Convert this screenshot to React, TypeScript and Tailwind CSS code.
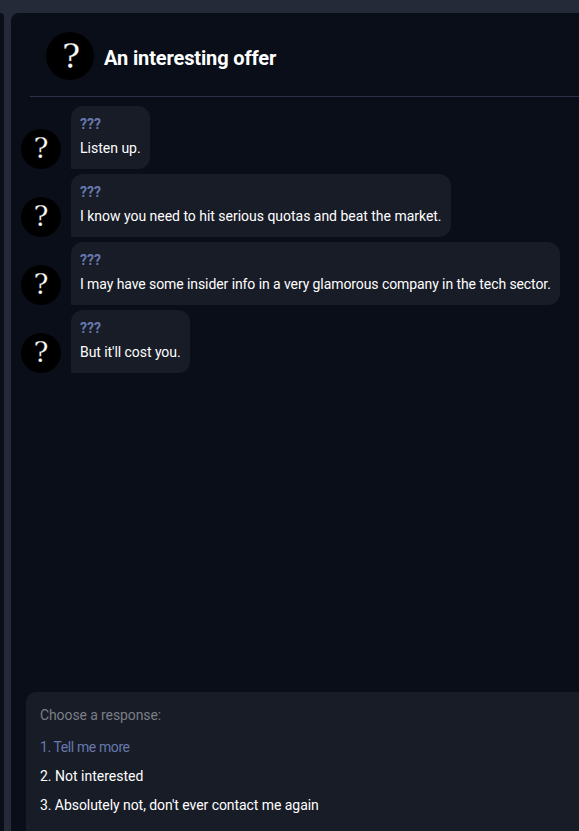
const messages = [
  { text: "Listen up.", size: "w-[79px]", spacing: "tracking-normal" },
  { text: "I know you need to hit serious quotas and beat the market.", size: "w-[380px]", spacing: "tracking-[-0.02px]" },
  { text: "I may have some insider info in a very glamorous company in the tech sector.", size: "w-[489px]", spacing: "tracking-[-0.085px]" },
  { text: "But it'll cost you.", size: "w-[119px]", spacing: "tracking-[-0.06px]" },
];

function Avatar({ large = false }: { large?: boolean }) {
  return (
    <div
      className={`flex shrink-0 items-center justify-center rounded-full bg-black font-['DejaVu_Serif',serif] text-white [-webkit-text-stroke:0.25px_black] ${
        large ? "size-12 pb-px pl-[2px] text-[34px] leading-[46px]" : "size-10 text-[28px] leading-[40px]"
      }`}
    >
      <span>?</span>
    </div>
  );
}

export default function App() {
  return (
    <div className="flex h-[831px] w-[579px] overflow-hidden bg-[#252a39] pt-[13px] font-[Roboto,sans-serif] text-[14px] text-white">
      <div className="w-1 shrink-0 rounded-tr-[8px] bg-[#0a0e19]" />
      <main className="ml-[7px] flex min-w-0 flex-1 flex-col rounded-tl-[8px] bg-[#0a0e19]">
        <header className="ml-[19px] flex h-[84px] shrink-0 items-start gap-[10px] border-b border-[#2b3146] pt-[19px] pl-4">
          <Avatar large />
          <h1 className="mt-[11px] text-[20px] leading-[30px] font-bold tracking-[-0.13px]">An interesting offer</h1>
        </header>
        <section className="mt-[9px] ml-[10px] flex flex-col gap-[5px]">
          {messages.map((message) => (
            <div key={message.text} className="flex items-end gap-[10px]">
              <Avatar />
              <div className={`h-[63px] shrink-0 rounded-[12px] rounded-bl-none bg-[#181c27] px-[9px] pt-[6px] ${message.size}`}>
                <div className="leading-6 font-bold text-[#6678ad]">???</div>
                <div className={`leading-6 whitespace-nowrap ${message.spacing}`}>{message.text}</div>
              </div>
            </div>
          ))}
        </section>
        <section className="mt-auto ml-[15px] h-[139px] shrink-0 rounded-tl-[10px] bg-[#181c27] pt-[13px] pl-[14px]">
          <p className="mb-2 leading-[21px] tracking-[-0.1px] text-[#7b7e86]">Choose a response:</p>
          <ol>
            <li className="h-[29px] leading-[27px] tracking-[-0.4px] text-[#6678ad]">1. Tell me more</li>
            <li className="h-[29px] leading-[27px]">2. Not interested</li>
            <li className="h-[29px] leading-[27px] tracking-[-0.06px]">3. Absolutely not, don't ever contact me again</li>
          </ol>
        </section>
      </main>
    </div>
  );
}
